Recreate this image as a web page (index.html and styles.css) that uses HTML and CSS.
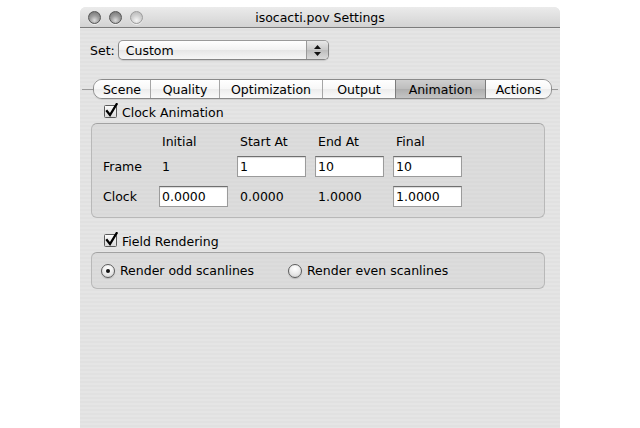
FILE: index.html
```html
<!DOCTYPE html>
<html>
<head>
<meta charset="utf-8">
<link rel="stylesheet" href="styles.css">
</head>
<body>
<div class="window">
  <div class="titlebar">
    <div class="lights">
      <span class="light"></span>
      <span class="light"></span>
      <span class="light light-off"></span>
    </div>
    <div class="title">isocacti.pov Settings</div>
  </div>
  <div class="content">
    <div class="setrow">
      <span class="setlabel">Set:</span>
      <div class="popup">
        <span class="popup-text">Custom</span>
        <span class="popup-arrows">
          <svg width="9" height="13" viewBox="0 0 9 13"><path d="M4.5 1 L8 5 L1 5 Z" fill="#111"/><path d="M4.5 12 L8 8 L1 8 Z" fill="#111"/></svg>
        </span>
      </div>
    </div>

    <div class="tabrow">
      <span class="tabline tabline-left"></span>
      <div class="tabs">
        <span class="tab tab-first w-scene">Scene</span>
        <span class="tab w-quality">Quality</span>
        <span class="tab w-opt">Optimization</span>
        <span class="tab w-output">Output</span>
        <span class="tab tab-sel w-anim">Animation</span>
        <span class="tab tab-last w-actions">Actions</span>
      </div>
      <span class="tabline tabline-right"></span>
    </div>

    <label class="check check-clock">
      <svg class="cbox" width="15" height="16" viewBox="0 0 15 16"><defs><linearGradient id="cg" x1="0" y1="0" x2="0" y2="1"><stop offset="0" stop-color="#fdfdfd"/><stop offset="1" stop-color="#d8d8d8"/></linearGradient></defs><rect x="0.5" y="2.5" width="12" height="12" rx="1" fill="url(#cg)" stroke="#5a5a5a"/><path d="M3 8.2 L6 12 L12.6 1.2" fill="none" stroke="#000" stroke-width="2.3" stroke-linecap="square" stroke-linejoin="miter"/></svg>
      <span>Clock Animation</span>
    </label>

    <div class="group group-clock">
      <div class="grid">
        <span class="head"></span>
        <span class="cell head">Initial</span>
        <span class="cell head">Start At</span>
        <span class="cell head">End At</span>
        <span class="cell head">Final</span>

        <span class="rowlabel">Frame</span>
        <span class="cell">1</span>
        <span class="field">1</span>
        <span class="field">10</span>
        <span class="field">10</span>

        <span class="rowlabel">Clock</span>
        <span class="field">0.0000</span>
        <span class="cell">0.0000</span>
        <span class="cell">1.0000</span>
        <span class="field">1.0000</span>
      </div>
    </div>

    <label class="check check-field">
      <svg class="cbox" width="15" height="16" viewBox="0 0 15 16"><defs><linearGradient id="cg2" x1="0" y1="0" x2="0" y2="1"><stop offset="0" stop-color="#fdfdfd"/><stop offset="1" stop-color="#d8d8d8"/></linearGradient></defs><rect x="0.5" y="2.5" width="12" height="12" rx="1" fill="url(#cg2)" stroke="#5a5a5a"/><path d="M3 8.2 L6 12 L12.6 1.2" fill="none" stroke="#000" stroke-width="2.3" stroke-linecap="square" stroke-linejoin="miter"/></svg>
      <span>Field Rendering</span>
    </label>

    <div class="group group-radio">
      <div class="radios">
        <label class="radio-opt">
          <span class="radio radio-on"></span>
          <span>Render odd scanlines</span>
        </label>
        <label class="radio-opt">
          <span class="radio"></span>
          <span>Render even scanlines</span>
        </label>
      </div>
    </div>
  </div>
</div>
</body>
</html>
```

FILE: styles.css
```css
html, body {
  margin: 0;
  padding: 0;
  background: #ffffff;
}

body {
  font-family: "DejaVu Sans", "Noto Sans", sans-serif;
  font-size: 12.5px;
  color: #000;
}

.window {
  margin: 7px 0 0 80px;
  width: 480px;
  height: 421px;
  border-radius: 6px 6px 0 0;
  overflow: hidden;
  background: repeating-linear-gradient(to bottom, #e5e5e5 0 2px, #e1e1e1 2px 4px);
  display: flex;
  flex-direction: column;
}

.titlebar {
  height: 20px;
  border-bottom: 1px solid #7c7c7c;
  background: linear-gradient(to bottom, #ebebeb, #d3d3d3);
  display: flex;
  align-items: center;
  position: relative;
}

.lights {
  display: flex;
  gap: 8px;
  padding-left: 8px;
}

.light {
  width: 13px;
  height: 13px;
  border-radius: 50%;
  box-sizing: border-box;
  border: 1px solid #555;
  background: radial-gradient(circle at 50% 75%, #dcdcdc 0, #9e9e9e 45%, #6e6e6e 100%);
  box-shadow: 0 1px 0 rgba(255,255,255,0.6);
}

.light-off {
  border-color: #9c9c9c;
  background: radial-gradient(circle at 50% 75%, #f4f4f4 0, #d0d0d0 50%, #b4b4b4 100%);
}

.title {
  position: absolute;
  left: 0;
  right: 0;
  top: 0;
  bottom: 0;
  display: flex;
  align-items: center;
  justify-content: center;
  pointer-events: none;
}

.content {
  flex: 1;
  display: flex;
  flex-direction: column;
}

.setrow {
  display: flex;
  align-items: center;
  margin-top: 12px;
  padding-left: 10px;
  gap: 3px;
}

.popup {
  width: 211px;
  height: 20px;
  box-sizing: border-box;
  border: 1px solid #858585;
  border-top-color: #9a9a9a;
  border-radius: 5px;
  background: linear-gradient(to bottom, #ffffff 0%, #f2f2f2 50%, #e6e6e6 51%, #f6f6f6 100%);
  display: flex;
  align-items: center;
  box-shadow: 0 1px 1px rgba(0,0,0,0.12);
}

.popup-text {
  flex: 1;
  padding-left: 7px;
}

.popup-arrows {
  width: 21px;
  height: 100%;
  border-left: 1px solid #9a9a9a;
  border-radius: 0 4px 4px 0;
  background: linear-gradient(to bottom, #e8e8e8, #c9c9c9 50%, #bdbdbd 51%, #dadada);
  display: flex;
  align-items: center;
  justify-content: center;
}

.tabrow {
  display: flex;
  align-items: center;
  margin-top: 19px;
  height: 20px;
}

.tabline {
  height: 1px;
  background: #9a9a9a;
}

.tabline-left {
  margin-left: 2px;
  flex: 0 0 11px;
}

.tabline-right {
  width: 6px;
}

.tabs {
  display: flex;
  height: 20px;
  box-sizing: border-box;
  border: 1px solid #8a8a8a;
  border-radius: 9px;
  overflow: hidden;
  box-shadow: 0 1px 1px rgba(0,0,0,0.1);
}

.tab {
  display: flex;
  align-items: center;
  justify-content: center;
  background: linear-gradient(to bottom, #ffffff 0%, #f7f7f7 50%, #ececec 51%, #fafafa 100%);
  border-left: 1px solid #a6a6a6;
  box-sizing: border-box;
}

.tab-first {
  border-left: none;
}

.tab-sel {
  background: linear-gradient(to bottom, #cfcfcf 0%, #bdbdbd 50%, #aeaeae 51%, #c4c4c4 100%);
  border-left-color: #7c7c7c;
}

.tab-sel + .tab {
  border-left-color: #7c7c7c;
}

.w-scene { width: 56px; }
.w-quality { width: 69px; }
.w-opt { width: 103px; }
.w-output { width: 73px; }
.w-anim { width: 90px; }
.w-actions { width: 66px; }

.check {
  display: flex;
  align-items: center;
  padding-left: 24px;
  gap: 3px;
  height: 16px;
}

.cbox {
  display: block;
  margin-top: -3px;
}

.check-clock {
  margin-top: 5px;
}

.check-field {
  margin-top: 15px;
}

.group {
  margin-left: 11px;
  width: 454px;
  box-sizing: border-box;
  border: 1px solid #b8b8b8;
  border-top-color: #a2a2a2;
  border-radius: 6px;
  background: rgba(0,0,0,0.035);
}

.group-clock {
  margin-top: 3px;
  height: 95px;
}

.grid {
  display: grid;
  grid-template-columns: 56px 78px 78px 78px 78px;
  grid-template-rows: 15px 22px 24px;
  row-gap: 6px;
  padding: 10px 0 0 11px;
  align-items: end;
}

.grid > span {
  line-height: 21px;
}

.grid > .head {
  line-height: 15px;
}

.cell {
  padding-left: 3px;
}

.field {
  width: 69px;
  height: 21px;
  box-sizing: border-box;
  background: #fff;
  border: 1px solid #9b9b9b;
  border-top-color: #6f6f6f;
  box-shadow: inset 0 1px 1px rgba(0,0,0,0.15);
  padding-left: 2px;
  display: flex;
  align-items: center;
}

.group-radio {
  margin-top: 3px;
  height: 37px;
  display: flex;
  align-items: center;
}

.radios {
  display: grid;
  grid-template-columns: 187px auto;
  padding-left: 9px;
}

.radio-opt {
  display: flex;
  align-items: center;
  gap: 5px;
}

.radio {
  width: 14px;
  height: 14px;
  box-sizing: border-box;
  border-radius: 50%;
  border: 1px solid #5c5c5c;
  background: radial-gradient(circle at 50% 30%, #ffffff 0, #f0f0f0 40%, #cfcfcf 100%);
  box-shadow: 0 1px 1px rgba(0,0,0,0.15);
  display: flex;
  align-items: center;
  justify-content: center;
}

.radio-on::after {
  content: "";
  width: 4px;
  height: 4px;
  border-radius: 50%;
  background: #111;
}
```
